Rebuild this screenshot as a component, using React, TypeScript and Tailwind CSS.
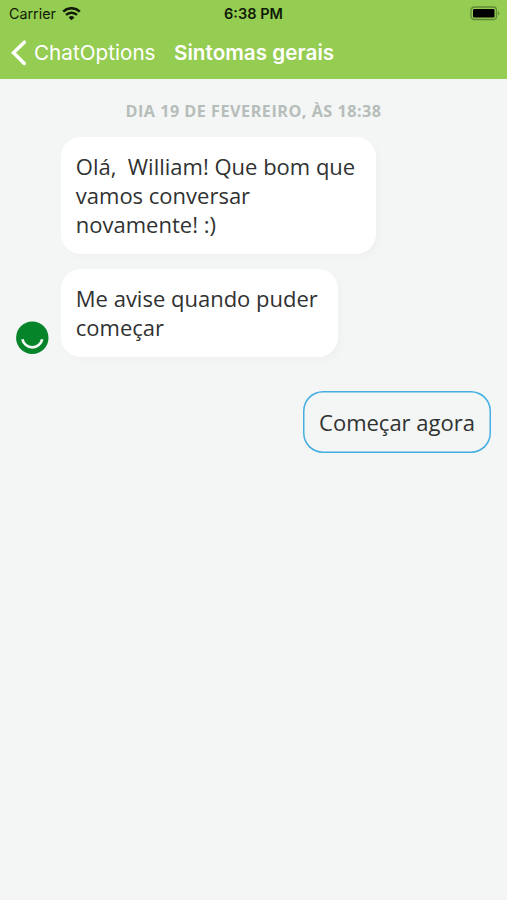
import type { ReactNode } from "react";

function WifiIcon() {
	return (
		<svg width="19" height="14" viewBox="0 0 19 14" fill="none">
			<path d="M1.2 4.6A12 12 0 0 1 17.8 4.6" stroke="#101a08" strokeWidth="2.6" />
			<path d="M4 7.9A8 8 0 0 1 15 7.9" stroke="#101a08" strokeWidth="2.4" />
			<path d="M9.5 13.2 6.6 10.5A4.2 4.2 0 0 1 12.4 10.5Z" fill="#101a08" />
		</svg>
	);
}

function BatteryIcon() {
	return (
		<svg width="31" height="15" viewBox="0 0 31 15" fill="none">
			<rect
				x="1"
				y="1"
				width="25.5"
				height="12.5"
				rx="3.2"
				stroke="#5f8936"
				strokeWidth="1.3"
			/>
			<rect x="3" y="3" width="21.5" height="8.5" rx="1.3" fill="#000" />
			<path d="M28 5.2C29.8 5.8 29.8 8.7 28 9.3Z" fill="#5f8936" />
		</svg>
	);
}

function Avatar() {
	return (
		<svg width="33" height="33" viewBox="0 0 33 33" fill="none">
			<circle cx="16.3" cy="16.7" r="16.2" fill="#05842a" />
			<path
				d="M6.4 18.2A10.1 10.1 0 0 0 26.2 18.2"
				stroke="#f4f9f4"
				strokeWidth="2.7"
			/>
		</svg>
	);
}

function Bubble({ children }: { children: ReactNode }) {
	return (
		<div className="w-fit whitespace-pre rounded-[20px] bg-white px-[14.8px] py-[14.6px] shadow-[4px_4px_6px_rgba(0,0,0,0.02)]">
			{children}
		</div>
	);
}

export default function App() {
	return (
		<div className="flex h-[900px] w-[507px] flex-col overflow-hidden bg-[#f3f6f4] font-['Open_Sans','Noto_Sans',sans-serif] text-[#303232]">
			<header className="h-[79px] shrink-0 bg-[#95cc52] font-['Inter',sans-serif]">
				<div className="grid h-[27px] grid-cols-3 items-center text-[#101a08]">
					<div className="flex items-center gap-1.5 pl-[9px] text-[14.3px]">
						<span>Carrier</span>
						<WifiIcon />
					</div>
					<span className="text-center font-semibold text-[14.5px]">
						6:38 PM
					</span>
					<div className="flex justify-end pr-[6px]">
						<BatteryIcon />
					</div>
				</div>
				<div className="flex h-[52px] items-center whitespace-nowrap pl-[10px] text-white">
					<svg width="17" height="27" viewBox="0 0 17 27" fill="none">
						<path
							d="M14.3 2.2 3.5 12.8 14.3 23.4"
							stroke="white"
							strokeWidth="3.5"
							strokeLinecap="round"
						/>
					</svg>
					<span className="ml-[7px] w-[121px] text-[20.7px]">ChatOptions</span>
					<h1 className="ml-[19px] font-semibold text-[20.7px]">
						Sintomas gerais
					</h1>
				</div>
			</header>

			<main className="text-[22px] leading-[29.3px]">
				<p className="mt-[20px] text-center font-bold text-[#b7bdba] text-[16.2px] leading-[24px] tracking-[0.5px]">
					DIA 19 DE FEVEREIRO, ÀS 18:38
				</p>
				<div className="mt-[14px] flex items-end">
					<div className="ml-[16px] flex w-[45px] pb-[3px]">
						<Avatar />
					</div>
					<div className="flex flex-col gap-[15px]">
						<Bubble>{"Olá,  William! Que bom que \nvamos conversar\nnovamente! :)"}</Bubble>
						<Bubble>{"Me avise quando puder \ncomeçar"}</Bubble>
					</div>
				</div>
				<div className="mt-[34px] flex justify-end pr-[16px]">
					<button
						type="button"
						className="h-[62px] w-[188px] whitespace-nowrap rounded-[20px] pt-[2px] text-center shadow-[inset_0_0_0_1.5px_#45aee2]"
					>
						Começar agora
					</button>
				</div>
			</main>
		</div>
	);
}
